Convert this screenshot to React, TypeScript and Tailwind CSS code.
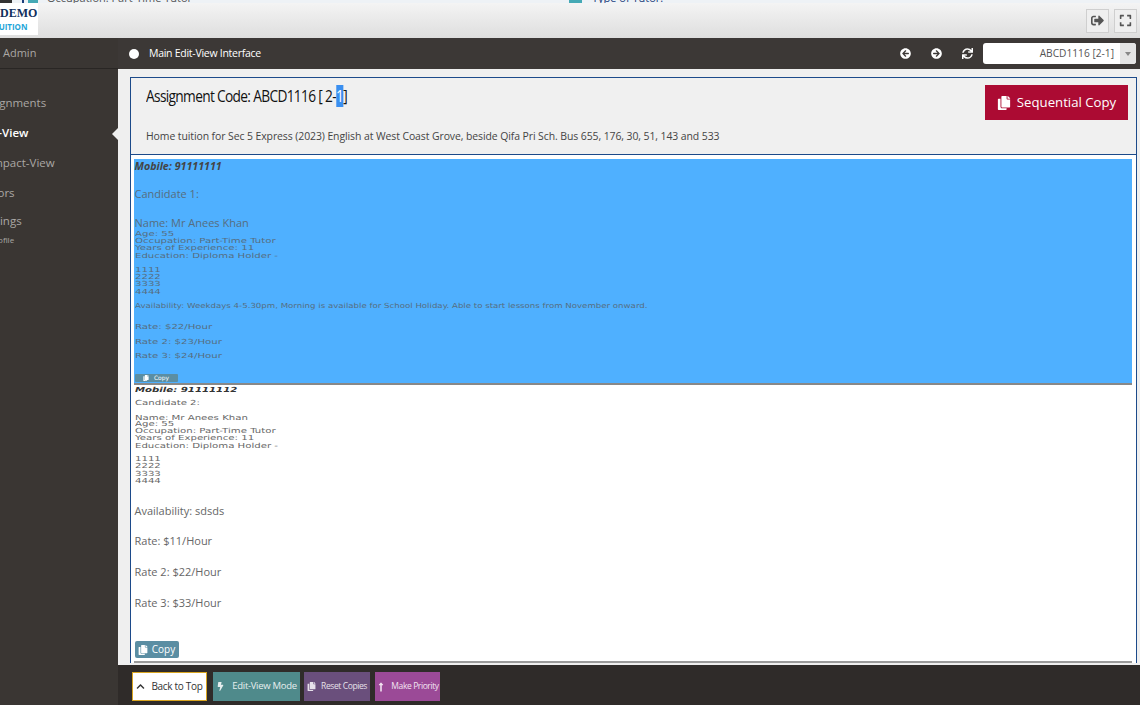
import { FaArrowCircleLeft, FaArrowCircleRight, FaBolt, FaChevronUp, FaCopy, FaExpand, FaLongArrowAltUp, FaSignOutAlt, FaSync } from "react-icons/fa"

const small = "origin-left scale-x-[1.45] font-['DejaVu_Sans',sans-serif] text-[7px] h-[7.3px] leading-[7.3px] whitespace-nowrap"

function SmallLines({ lines }: { lines: string[] }) {
    return (
        <>
            {lines.map((l, i) => (
                <div key={i} className={small}>{l}</div>
            ))}
        </>
    )
}

function FooterButton({ icon, label, className }: { icon: React.ReactNode; label: string; className: string }) {
    return (
        <button className={`flex h-[29px] items-center justify-center whitespace-nowrap ${className}`}>
            {icon}
            {label}
        </button>
    )
}

export default function App() {
    return (
        <div className="flex h-[705px] w-[1140px] flex-col overflow-hidden bg-[#efefef] font-['Open_Sans',sans-serif]">
            {/* clipped strip of the page behind */}
            <div className="flex h-[3px] shrink-0 overflow-hidden bg-[#eef2f6] text-[11px] leading-[14px] text-[#555]">
                <div className="h-[3px] w-[12px] shrink-0 bg-[#333]" />
                <div className="ml-[10px] h-[3px] w-[2px] shrink-0 bg-[#1c3f7c]" />
                <div className="ml-[4px] h-[3px] w-[10px] shrink-0 bg-[#45a9b5]" />
                <div className="-mt-[9px] ml-[9px] w-[522px] shrink-0">Occupation: Part-Time Tutor</div>
                <div className="h-[3px] w-[13px] shrink-0 bg-[#45a9b5]" />
                <div className="-mt-[9px] ml-[10px] text-[#1c3f7c]">Type of Tutor:</div>
            </div>

            <header className="flex h-[35px] shrink-0 items-center justify-between bg-gradient-to-b from-[#f4f4f4] to-[#dedede] pr-[3px]">
                <div className="flex h-[32px] w-[38px] flex-col self-start overflow-hidden bg-white">
                    <div className="mt-[2px] whitespace-nowrap font-['Liberation_Serif',serif] text-[12px] leading-[16px] font-bold text-[#10305c]">DEMO</div>
                    <div className="-ml-[6px] mt-[1px] text-[8px] leading-[10px] font-bold text-[#1ea5d8]">TUITION</div>
                </div>
                <div className="flex gap-[5px]">
                    <button className="flex h-[24px] w-[23px] items-center justify-center border border-[#cfcfcf] bg-[#efefef] text-[13px] text-[#555]"><FaSignOutAlt /></button>
                    <button className="flex h-[24px] w-[23px] items-center justify-center border border-[#cfcfcf] bg-[#efefef] text-[13px] text-[#555]"><FaExpand /></button>
                </div>
            </header>

            <div className="flex min-h-0 flex-1">
                <aside className="relative w-[118px] shrink-0 overflow-hidden bg-[#3a3633] text-[11.5px] text-[#aaa7a4]">
                    <div className="h-[31px] border-b border-[#292624] pl-[3px] text-[11px] leading-[30px]">Admin</div>
                    <nav className="whitespace-nowrap">
                        <div className="-ml-[22px] mt-[19px] h-[30px] leading-[30px]">Assignments</div>
                        <div className="-ml-[23px] h-[30px] font-semibold leading-[30px] text-white">Edit-View</div>
                        <div className="-ml-[22px] h-[30px] leading-[30px]">Compact-View</div>
                        <div className="-ml-[20px] h-[29px] leading-[29px]">Tutors</div>
                        <div className="-ml-[21px] h-[28px] leading-[28px]">Settings</div>
                        <div className="-ml-[10px] text-[8px] leading-[10px]">Profile</div>
                    </nav>
                    <div className="absolute right-0 top-[90px] h-0 w-0 border-y-[6px] border-r-[6px] border-y-transparent border-r-[#efefef]" />
                </aside>

                <main className="flex min-w-0 flex-1 flex-col">
                    <div className="flex h-[31px] shrink-0 items-center bg-[#3c3836] pl-[11px] pr-[4px] text-white">
                        <span className="h-[10px] w-[10px] rounded-full bg-white" />
                        <span className="ml-[10px] text-[10.5px] tracking-[-0.27px]">Main Edit-View Interface</span>
                        <div className="ml-auto flex items-center text-[11px]">
                            <FaArrowCircleLeft />
                            <FaArrowCircleRight className="ml-[20px]" />
                            <FaSync className="ml-[20px]" />
                            <div className="ml-[10px] flex h-[21px] w-[153px] overflow-hidden rounded-[3px] bg-white text-[10.2px] text-[#555]">
                                <span className="flex-1 pr-[6px] text-right leading-[21px]">ABCD1116 [2-1]</span>
                                <span className="flex w-[16px] items-center justify-center bg-[#e4e4e4]">
                                    <span className="h-0 w-0 border-x-[3px] border-t-[4px] border-x-transparent border-t-[#888]" />
                                </span>
                            </div>
                        </div>
                    </div>

                    <div className="min-h-0 flex-1 overflow-hidden pl-[12px] pr-[3px] pt-[8px]">
                        <div className="border-[1.5px] border-b-0 border-[#1c4a8a] bg-white text-[#666]">
                            <section className="relative h-[77px] border-b-[1.5px] border-[#1c4a8a] bg-[#f0f0f0] pl-[15px]">
                                <div className="origin-left scale-x-[0.885] whitespace-nowrap pt-[7px] text-[15.5px] leading-[22px] tracking-[-0.75px] text-[#111]">
                                    Assignment Code: ABCD1116 [ 2-<span className="bg-[#3a8ff0] text-white">1</span>]
                                </div>
                                <div className="mt-[20px] origin-left scale-x-[0.907] whitespace-nowrap text-[11.5px] leading-[18px] tracking-[-0.09px] text-[#444]">
                                    Home tuition for Sec 5 Express (2023) English at West Coast Grove, beside Qifa Pri Sch. Bus 655, 176, 30, 51, 143 and 533
                                </div>
                                <button className="absolute right-[8px] top-[7px] flex h-[35px] w-[143px] items-center justify-center gap-[6px] bg-[#ac0b33] text-[13.2px] text-white">
                                    <FaCopy className="text-[14px]" />
                                    Sequential Copy
                                </button>
                            </section>

                            <div className="pl-[2.5px] pr-[4.5px] pt-[4px]">
                                {/* first candidate, selected */}
                                <section className="h-[224px] bg-[#4fb0ff] pl-[1px] text-[#566d80]">
                                    <div className="h-[14px] text-[10.7px] leading-[14px] font-bold italic text-[#444]">Mobile: 91111111</div>
                                    <div className="mt-[14px] h-[14px] text-[11px] leading-[14px]">Candidate 1:</div>
                                    <div className="mt-[15px] h-[14px] text-[11px] leading-[14px]">Name: Mr Anees Khan</div>
                                    <div className="pt-[0.7px]">
                                        <SmallLines lines={["Age: 55", "Occupation: Part-Time Tutor", "Years of Experience: 11", "Education: Diploma Holder -"]} />
                                    </div>
                                    <div className="mt-[7px]">
                                        <SmallLines lines={["1111", "2222", "3333", "4444"]} />
                                    </div>
                                    <div className="mt-[7px] h-[7.3px] origin-left scale-x-[1.23] whitespace-nowrap font-['DejaVu_Sans',sans-serif] text-[7px] leading-[7.3px]">Availability: Weekdays 4-5.30pm, Morning is available for School Holiday. Able to start lessons from November onward.</div>
                                    <div className={`mt-[13.3px] ${small}`}>Rate: $22/Hour</div>
                                    <div className={`mt-[8px] ${small}`}>Rate 2: $23/Hour</div>
                                    <div className={`mt-[7px] ${small}`}>Rate 3: $24/Hour</div>
                                    <button className="mt-[13px] flex h-[8px] w-[43px] items-center justify-center gap-[5px] rounded-[1px] bg-[#5b8ea3] font-['DejaVu_Sans',sans-serif] text-[6px] text-white">
                                        <FaCopy className="text-[6px]" />
                                        Copy
                                    </button>
                                </section>

                                <section className="h-[280px] border-y-2 border-[#9a9a9a] border-t-[#888] pl-[1px]">
                                    <div className={`${small} mt-[2px] font-bold italic text-[#333]`}>Mobile: 91111112</div>
                                    <div className={`${small} mt-[6px]`}>Candidate 2:</div>
                                    <div className={`${small} mt-[7px]`}>Name: Mr Anees Khan</div>
                                    <div className="-mt-[1px]">
                                        <SmallLines lines={["Age: 55", "Occupation: Part-Time Tutor", "Years of Experience: 11", "Education: Diploma Holder -"]} />
                                    </div>
                                    <div className="mt-[6px]">
                                        <SmallLines lines={["1111", "2222", "3333", "4444"]} />
                                    </div>
                                    <div className="mt-[18px] h-[16px] text-[11px] leading-[16px]">Availability: sdsds</div>
                                    <div className="mt-[14px] h-[16px] text-[11px] leading-[16px]">Rate: $11/Hour</div>
                                    <div className="mt-[15px] h-[16px] text-[11px] leading-[16px]">Rate 2: $22/Hour</div>
                                    <div className="mt-[15px] h-[16px] text-[11px] leading-[16px]">Rate 3: $33/Hour</div>
                                    <button className="mt-[30px] flex h-[17px] w-[44px] items-center justify-center gap-[4px] rounded-[2px] bg-[#5b8ea3] text-[10px] text-white">
                                        <FaCopy className="text-[10px]" />
                                        Copy
                                    </button>
                                </section>
                            </div>
                        </div>
                    </div>

                    <footer className="flex h-[40px] shrink-0 items-start bg-[#2f2b29] pl-[14px] pt-[7px]">
                        <FooterButton icon={<FaChevronUp className="text-[9px]" />} label="Back to Top" className="w-[75px] gap-[6px] border border-[#d9a520] bg-white text-[10px] tracking-[-0.3px] text-[#333]" />
                        <FooterButton icon={<FaBolt className="text-[9px]" />} label="Edit-View Mode" className="ml-[6px] w-[87px] gap-[7px] bg-[#4f8a8b] text-[9.5px] tracking-[-0.3px] text-[#e6eeee]" />
                        <FooterButton icon={<FaCopy className="text-[9px]" />} label="Reset Copies" className="ml-[4px] w-[66px] gap-[5px] bg-[#6a4f7c] text-[8.5px] tracking-[-0.4px] text-[#e6e0ea]" />
                        <FooterButton icon={<FaLongArrowAltUp className="text-[10px]" />} label="Make Priority" className="ml-[5px] w-[65px] gap-[5px] bg-[#9b4a97] text-[8.5px] tracking-[-0.4px] text-[#f2e3f1]" />
                    </footer>
                </main>
            </div>
        </div>
    )
}
